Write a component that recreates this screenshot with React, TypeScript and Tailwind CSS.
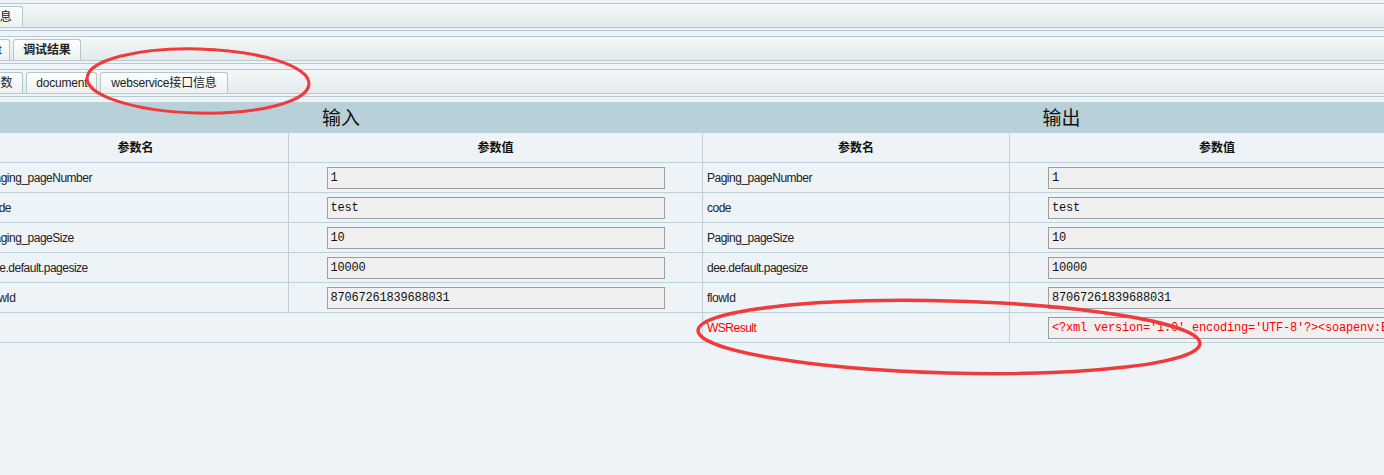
import React from "react";

const SANS = "font-['Liberation_Sans','Noto_Sans_CJK_SC',sans-serif]";

function Tab({ children, className = "px-[10px]" }: { children: React.ReactNode; className?: string }) {
  return (
    <div
      className={`h-[21px] flex items-center shrink-0 border border-b-0 border-[#b3c6cc] rounded-t-[3px] bg-linear-to-b from-[#fdfefe] to-[#edf1f2] text-[12px] tracking-[-0.2px] text-[#222] whitespace-nowrap ${className}`}
    >
      {children}
    </div>
  );
}

function Strip({ children }: { children: React.ReactNode }) {
  return (
    <>
      <div className="h-[25px] border-y border-[#b5c9cf] bg-linear-to-b from-[#f4f7f8] to-[#e3eaec] flex items-end gap-[3px]">
        {children}
      </div>
      <div className="h-[2px]" />
      <div className="h-px bg-[#b5c9cf]" />
      <div className="h-[5px]" />
    </>
  );
}

type Row = { name: string; value: string; red?: boolean };

const leftRows: Row[] = [
  { name: "Paging_pageNumber", value: "1" },
  { name: "code", value: "test" },
  { name: "Paging_pageSize", value: "10" },
  { name: "dee.default.pagesize", value: "10000" },
  { name: "flowId", value: "87067261839688031" },
];

const rightRows: Row[] = [
  ...leftRows,
  {
    name: "WSResult",
    value:
      "<?xml version='1.0' encoding='UTF-8'?><soapenv:Envelope xmlns:soapenv='http://schemas.xmlsoap.org/soap/envelope/'>",
    red: true,
  },
];

function SubTable({ rows, labelW, last }: { rows: Row[]; labelW: string; last?: boolean }) {
  return (
    <div className="flex flex-col">
      <div className="flex h-[30px] border-b border-[#bcd1d8]">
        <div className={`${labelW} shrink-0 border-r border-[#bcd1d8] flex items-center justify-center text-[12px] font-bold text-[#111]`}>
          参数名
        </div>
        <div className="flex-1 flex items-center justify-center text-[12px] font-bold text-[#111]">参数值</div>
      </div>
      {rows.map((r, i) => {
        const isLast = last && i === rows.length - 1;
        return (
          <div
            key={r.name}
            className={isLast ? "flex h-[29px]" : "flex h-[30px] border-b border-[#bcd1d8]"}
          >
            <div
              className={`${labelW} shrink-0 border-r border-[#bcd1d8] flex items-center pl-[4px] text-[12px] tracking-[-0.5px] whitespace-nowrap overflow-hidden ${
                r.red ? "text-[#ff0000]" : "text-[#222]"
              }`}
            >
              {r.name}
            </div>
            <div className="flex-1 flex items-center justify-center">
              <div
                className={`w-[338px] h-[22px] shrink-0 border border-[#9e9e9e] bg-[#f0f0f0] flex items-center pl-[3px] font-['Liberation_Mono',monospace] text-[12px] tracking-[-0.2px] whitespace-nowrap overflow-hidden ${
                  r.red ? "text-[#ff0000]" : "text-[#111]"
                }`}
              >
                {r.value}
              </div>
            </div>
          </div>
        );
      })}
    </div>
  );
}

export default function App() {
  return (
    <div className={`relative w-[1384px] h-[475px] overflow-hidden bg-[#edf3f6] pt-[3px] ${SANS}`}>
      <Strip>
        <Tab className="px-[10px] ml-[-23px]">信息</Tab>
      </Strip>
      <Strip>
        <Tab className="px-[8px] ml-[-51px]">Request</Tab>
        <Tab className="px-[9px] font-bold">调试结果</Tab>
      </Strip>
      <Strip>
        <Tab className="px-[10px] ml-[-46px]">输入参数</Tab>
        <Tab className="px-[9px]">document</Tab>
        <Tab>webservice接口信息</Tab>
      </Strip>

      <div className="ml-[-17px] w-[1441px]">
        <div className="flex h-[31px] bg-[#b8d0d7]">
          <div className="w-[716px] shrink-0 flex items-center justify-center text-[19px] text-[#111] font-['Noto_Sans_CJK_SC',sans-serif]">
            输入
          </div>
          <div className="w-[725px] shrink-0 flex items-center justify-center text-[19px] text-[#111] font-['Noto_Sans_CJK_SC',sans-serif]">
            输出
          </div>
        </div>
        <div className="flex h-[210px] border-b border-[#bcd1d8]">
          <div className="w-[720px] shrink-0 border-r border-[#bcd1d8]">
            <SubTable rows={leftRows} labelW="w-[306px]" />
          </div>
          <div className="w-[721px] shrink-0">
            <SubTable rows={rightRows} labelW="w-[307px]" last />
          </div>
        </div>
      </div>

      <svg className="absolute inset-0 pointer-events-none" width="1384" height="475" viewBox="0 0 1384 475">
        <ellipse
          cx="198"
          cy="81"
          rx="111"
          ry="32"
          transform="rotate(1.5 198 81)"
          fill="none"
          stroke="#f13a3c"
          strokeWidth="3"
        />
        <ellipse
          cx="949"
          cy="337"
          rx="251"
          ry="36"
          transform="rotate(1.5 949 337)"
          fill="none"
          stroke="#f13a3c"
          strokeWidth="3.5"
        />
      </svg>
    </div>
  );
}
